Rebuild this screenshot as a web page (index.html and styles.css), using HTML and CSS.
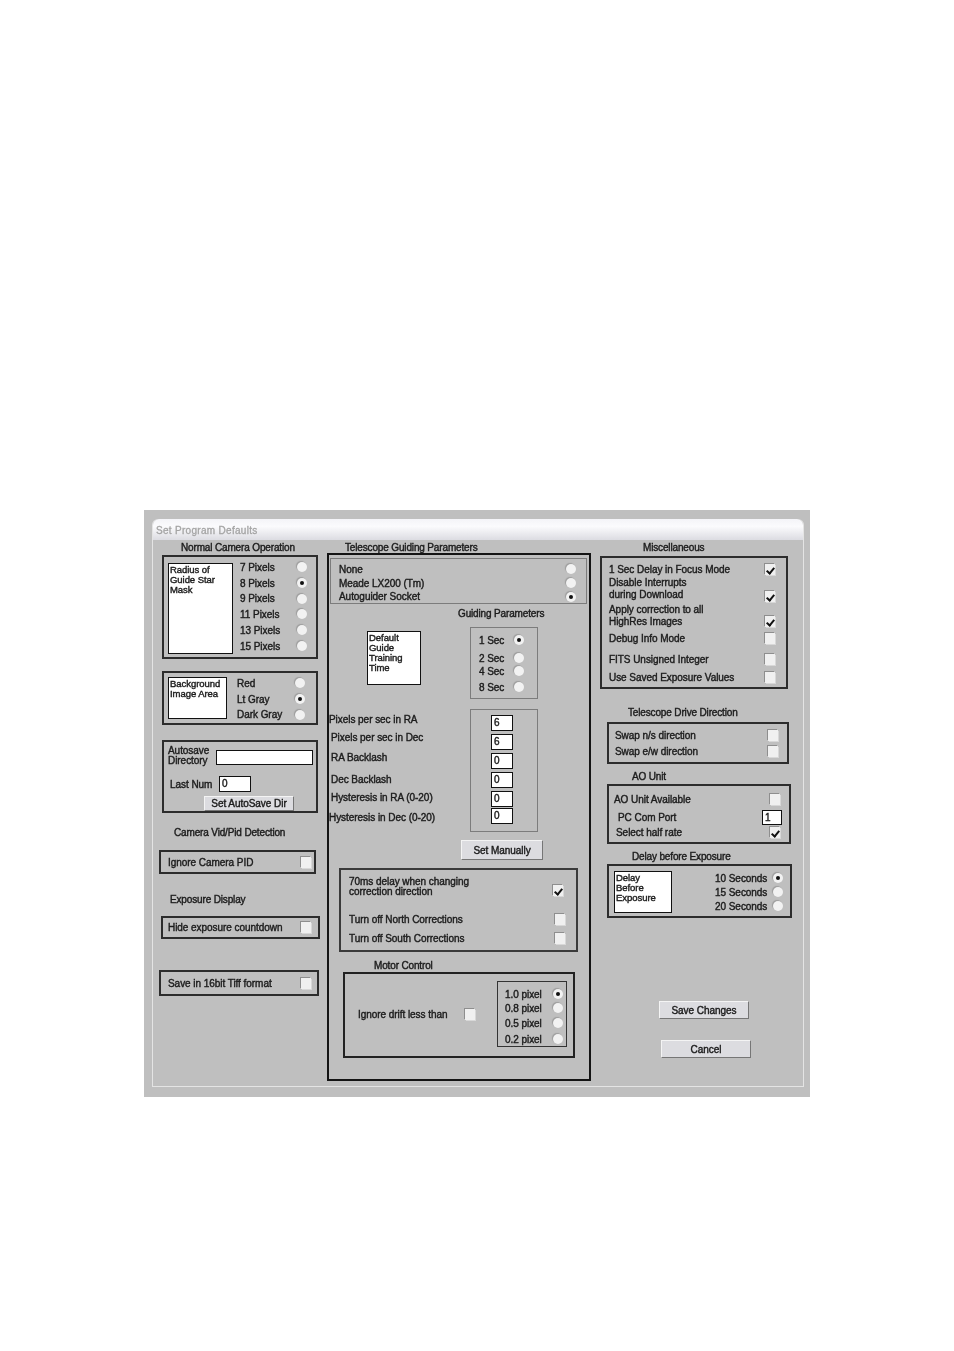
FILE: index.html
```html
<!DOCTYPE html>
<html lang="en">
<head>
    <meta charset="UTF-8">
    <title>Set Program Defaults</title>
    <link rel="stylesheet" href="styles.css">
</head>
<body>
    <div class="scan">
        <div class="window">
            <div class="titlebar">Set Program Defaults</div>
            <div class="window-body">

                <!-- left column -->
                <div class="col col-left">
                    <div class="label label-camera">Normal Camera Operation</div>
                    <div class="box box-radius">
                        <div class="note note-radius">Radius of<br>Guide Star<br>Mask</div>
                        <div class="options options-radius">
                            <div class="opt"><span>7 Pixels</span><i class="radio"></i></div>
                            <div class="opt"><span>8 Pixels</span><i class="radio on"></i></div>
                            <div class="opt"><span>9 Pixels</span><i class="radio"></i></div>
                            <div class="opt"><span>11 Pixels</span><i class="radio"></i></div>
                            <div class="opt"><span>13 Pixels</span><i class="radio"></i></div>
                            <div class="opt"><span>15 Pixels</span><i class="radio"></i></div>
                        </div>
                    </div>
                    <div class="box box-background">
                        <div class="note note-background">Background<br>Image Area</div>
                        <div class="options options-background">
                            <div class="opt"><span>Red</span><i class="radio"></i></div>
                            <div class="opt"><span>Lt Gray</span><i class="radio on"></i></div>
                            <div class="opt"><span>Dark Gray</span><i class="radio"></i></div>
                        </div>
                    </div>
                    <div class="box box-autosave">
                        <div class="autosave-row">
                            <div class="autosave-label">Autosave<br>Directory</div>
                            <div class="field field-dir"></div>
                        </div>
                        <div class="lastnum-row">
                            <span class="lastnum-label">Last Num</span>
                            <div class="field field-num">0</div>
                        </div>
                        <div class="btn btn-autosave">Set AutoSave Dir</div>
                    </div>
                    <div class="label label-pid">Camera Vid/Pid Detection</div>
                    <div class="box single box-pid"><span>Ignore Camera PID</span><i class="check"></i></div>
                    <div class="label label-exposure">Exposure Display</div>
                    <div class="box single box-hide"><span>Hide exposure countdown</span><i class="check"></i></div>
                    <div class="box single box-tiff"><span>Save in 16bit Tiff format</span><i class="check"></i></div>
                </div>

                <!-- centre column -->
                <div class="col col-centre">
                    <div class="label label-telescope">Telescope Guiding Parameters</div>
                    <div class="box box-guiding">
                        <div class="thin options-mount">
                            <div class="opt"><span>None</span><i class="radio"></i></div>
                            <div class="opt"><span>Meade LX200 (Tm)</span><i class="radio"></i></div>
                            <div class="opt"><span>Autoguider Socket</span><i class="radio on"></i></div>
                        </div>
                        <div class="label label-params">Guiding Parameters</div>
                        <div class="training-row">
                            <div class="note note-training">Default<br>Guide<br>Training<br>Time</div>
                            <div class="thin options-training">
                                <div class="opt"><span>1 Sec</span><i class="radio on"></i></div>
                                <div class="opt"><span>2 Sec</span><i class="radio"></i></div>
                                <div class="opt"><span>4 Sec</span><i class="radio"></i></div>
                                <div class="opt"><span>8 Sec</span><i class="radio"></i></div>
                            </div>
                        </div>
                        <div class="rates-row">
                            <div class="rate-labels">
                                <span>Pixels per sec in RA</span>
                                <span>Pixels per sec in Dec</span>
                                <span>RA Backlash</span>
                                <span>Dec Backlash</span>
                                <span>Hysteresis in RA (0-20)</span>
                                <span>Hysteresis in Dec (0-20)</span>
                            </div>
                            <div class="thin rate-fields">
                                <div class="field">6</div>
                                <div class="field">6</div>
                                <div class="field">0</div>
                                <div class="field">0</div>
                                <div class="field">0</div>
                                <div class="field">0</div>
                            </div>
                        </div>
                        <div class="btn btn-manual">Set Manually</div>
                        <div class="box box-corrections">
                            <div class="opt opt-delay"><span>70ms delay when changing<br>correction direction</span><i class="check on"></i></div>
                            <div class="opt"><span>Turn off North Corrections</span><i class="check"></i></div>
                            <div class="opt"><span>Turn off South Corrections</span><i class="check"></i></div>
                        </div>
                        <div class="label label-motor">Motor Control</div>
                        <div class="box box-motor">
                            <span class="drift-label">Ignore drift less than</span>
                            <i class="check"></i>
                            <div class="options-drift">
                                <div class="opt"><span>1.0 pixel</span><i class="radio on"></i></div>
                                <div class="opt"><span>0.8 pixel</span><i class="radio"></i></div>
                                <div class="opt"><span>0.5 pixel</span><i class="radio"></i></div>
                                <div class="opt"><span>0.2 pixel</span><i class="radio"></i></div>
                            </div>
                        </div>
                    </div>
                </div>

                <!-- right column -->
                <div class="col col-right">
                    <div class="label label-misc">Miscellaneous</div>
                    <div class="box box-misc">
                        <div class="opt"><span>1 Sec Delay in Focus Mode</span><i class="check on"></i></div>
                        <div class="opt opt-two"><span>Disable Interrupts<br>during Download</span><i class="check on"></i></div>
                        <div class="opt opt-two"><span>Apply correction to all<br>HighRes Images</span><i class="check on"></i></div>
                        <div class="opt"><span>Debug Info Mode</span><i class="check"></i></div>
                        <div class="opt"><span>FITS Unsigned Integer</span><i class="check"></i></div>
                        <div class="opt"><span>Use Saved Exposure Values</span><i class="check"></i></div>
                    </div>
                    <div class="label label-drive">Telescope Drive Direction</div>
                    <div class="box box-drive">
                        <div class="opt"><span>Swap n/s direction</span><i class="check"></i></div>
                        <div class="opt"><span>Swap e/w direction</span><i class="check"></i></div>
                    </div>
                    <div class="label label-ao">AO Unit</div>
                    <div class="box box-ao">
                        <div class="opt"><span>AO Unit Available</span><i class="check"></i></div>
                        <div class="opt"><span>PC Com Port</span><div class="field field-port">1</div></div>
                        <div class="opt"><span>Select half rate</span><i class="check on"></i></div>
                    </div>
                    <div class="label label-delay">Delay before Exposure</div>
                    <div class="box box-delay">
                        <div class="note note-delay">Delay<br>Before<br>Exposure</div>
                        <div class="options options-delay">
                            <div class="opt"><span>10 Seconds</span><i class="radio on"></i></div>
                            <div class="opt"><span>15 Seconds</span><i class="radio"></i></div>
                            <div class="opt"><span>20 Seconds</span><i class="radio"></i></div>
                        </div>
                    </div>
                    <div class="btn btn-save">Save Changes</div>
                    <div class="btn btn-cancel">Cancel</div>
                </div>

            </div>
        </div>
    </div>
</body>
</html>
```
FILE: styles.css
```css
* {
    box-sizing: border-box;
}
body {
    margin: 0;
    height: 1351px;
    padding: 510px 0 0 144px;
    background-color: #ffffff;
    font-family: 'Liberation Sans', Arial, sans-serif;
    font-size: 10px;
    letter-spacing: -0.05px;
    -webkit-text-stroke: 0.4px #1c1c1c;
    color: #1c1c1c;
}
.scan {
    width: 666px;
    height: 587px;
    padding: 9px 6px 10px 8px;
    background-color: #bfbfbf;
    filter: blur(0.35px);
}
.window {
    height: 568px;
    border: 1px solid #e4e4e4;
    border-top: none;
    border-radius: 6px 6px 0 0;
    background-color: #bfbfbf;
}
.titlebar {
    height: 21px;
    padding: 7px 0 0 3px;
    border-radius: 6px 6px 0 0;
    background: linear-gradient(#f4f4f8, #fbfbfd 35%, #dcdce2);
    -webkit-text-stroke: 0.3px #a4a4a4;
    color: #a4a4a4;
    letter-spacing: 0.3px;
    line-height: 10px;
}
.window-body {
    display: flex;
    padding-left: 6px;
}
.col {
    display: flex;
    flex-direction: column;
    align-items: flex-start;
}
.col-left {
    width: 161px;
}
.col-centre {
    width: 264px;
    margin-left: 7px;
}
.col-right {
    width: 192px;
    margin-left: 9px;
}

.label {
    height: 14px;
    line-height: 14px;
    letter-spacing: -0.15px;
    white-space: nowrap;
}
.box {
    border: 2px solid #2c2c2c;
    flex-shrink: 0;
}
.thin {
    border: 1px solid #7c7c7c;
}
.note {
    flex-shrink: 0;
    padding: 1px 0 0 1px;
    border: 1px solid #111111;
    background-color: #ffffff;
    font-size: 9.5px;
    line-height: 10px;
}
.field {
    height: 16px;
    padding-left: 2px;
    border: 1px solid #111111;
    background-color: #ffffff;
    line-height: 13px;
}
.opt {
    display: flex;
    justify-content: space-between;
    align-items: center;
    white-space: nowrap;
}
.options {
    display: grid;
    flex-shrink: 0;
}
.radio {
    position: relative;
    display: block;
    flex-shrink: 0;
    width: 10px;
    height: 10px;
    border-radius: 50%;
    background-color: #f2f2f2;
    box-shadow: -1px -1px 1px #9c9c9c;
}
.radio.on::after {
    content: '';
    position: absolute;
    top: 3px;
    left: 3px;
    width: 4px;
    height: 4px;
    border-radius: 50%;
    background-color: #111111;
}
.check {
    position: relative;
    display: block;
    flex-shrink: 0;
    width: 10px;
    height: 11px;
    background-color: #f0f0f0;
    box-shadow: -1px -1px 0 #8e8e8e, 1px 1px 0 #d8d8d8;
}
.check.on::after {
    content: '';
    position: absolute;
    top: 2px;
    left: 3px;
    width: 3px;
    height: 6px;
    border: solid #111111;
    border-width: 0 2px 2px 0;
    transform: rotate(40deg);
}
.btn {
    display: flex;
    flex-shrink: 0;
    justify-content: center;
    align-items: center;
    border: 1px solid;
    border-color: #f4f4f4 #767676 #767676 #f4f4f4;
    background-color: #dcdce0;
}
.single {
    display: flex;
    justify-content: space-between;
    align-items: center;
    padding-left: 7px;
    white-space: nowrap;
}

/* left column */
.label-camera {
    margin: 1px 0 0 22px;
}
.box-radius {
    display: flex;
    align-items: flex-start;
    width: 156px;
    height: 104px;
    margin-left: 3px;
    padding: 2px 0 0 4px;
}
.note-radius {
    width: 65px;
    height: 91px;
    margin-top: 4px;
}
.options-radius {
    width: 67px;
    margin-left: 7px;
    grid-template-rows: 16px 16px 15px 16px 16px 16px;
}
.box-background {
    display: flex;
    align-items: flex-start;
    width: 156px;
    height: 54px;
    margin: 12px 0 0 3px;
    padding: 2px 0 0 4px;
}
.note-background {
    width: 59px;
    height: 42px;
    margin-top: 2px;
}
.options-background {
    width: 68px;
    margin-left: 10px;
    grid-template-rows: 16px 16px 15px;
}
.box-autosave {
    width: 156px;
    height: 73px;
    margin: 15px 0 0 3px;
    padding: 4px 0 0 4px;
}
.autosave-row {
    display: flex;
    align-items: flex-start;
    height: 20px;
}
.autosave-label {
    width: 48px;
    line-height: 10px;
}
.field-dir {
    width: 97px;
    height: 15px;
    margin-top: 4px;
}
.lastnum-row {
    display: flex;
    align-items: center;
    margin-top: 10px;
}
.lastnum-label {
    width: 49px;
    margin-left: 2px;
}
.field-num {
    width: 32px;
}
.btn-autosave {
    width: 90px;
    height: 15px;
    margin: 4px 0 0 36px;
}
.label-pid {
    margin: 13px 0 0 15px;
}
.box-pid {
    width: 157px;
    height: 24px;
    margin-top: 10px;
    padding-right: 3px;
}
.label-exposure {
    margin: 19px 0 0 11px;
}
.box-hide {
    width: 159px;
    height: 23px;
    margin: 9px 0 0 2px;
    padding: 0 7px 0 5px;
}
.box-tiff {
    width: 160px;
    height: 26px;
    margin-top: 31px;
    padding-right: 6px;
}

/* centre column */
.label-telescope {
    margin: 1px 0 0 18px;
    height: 12px;
}
.box-guiding {
    width: 264px;
    height: 528px;
    border-color: #141414;
}
.options-mount {
    display: grid;
    grid-template-rows: 14px 14px 13px;
    width: 257px;
    height: 46px;
    margin: 3px 0 0 1px;
    padding: 3px 10px 0 8px;
}
.label-params {
    margin: 3px 0 0 129px;
    height: 15px;
}
.training-row {
    display: flex;
    align-items: flex-start;
    margin-top: 5px;
}
.note-training {
    width: 54px;
    height: 54px;
    margin: 4px 0 0 38px;
}
.options-training {
    display: grid;
    grid-template-rows: 18px 18px 8px 24px;
    width: 68px;
    height: 72px;
    margin-left: 49px;
    padding: 3px 13px 0 8px;
}
.rates-row {
    display: flex;
    margin-top: 10px;
}
.rate-labels {
    display: grid;
    grid-template-rows: 20px 16px 24px 20px 16px 24px;
    align-items: center;
    width: 141px;
    white-space: nowrap;
}
.rate-labels span:nth-child(n+2):nth-child(-n+5) {
    margin-left: 2px;
}
.rate-fields {
    display: flex;
    flex-direction: column;
    gap: 3px;
    width: 68px;
    height: 123px;
    padding: 5px 0 0 20px;
}
.rate-fields .field {
    width: 22px;
}
.rate-fields .field:last-child {
    margin-top: -2px;
}
.btn-manual {
    width: 82px;
    height: 20px;
    margin: 8px 0 0 132px;
}
.box-corrections {
    display: grid;
    grid-template-rows: 33px 18px 20px;
    width: 239px;
    height: 84px;
    margin: 8px 0 0 10px;
    padding: 7px 11px 0 8px;
    border-color: #3a3a3a;
}
.opt-delay {
    align-items: flex-start;
    line-height: 9.5px;
}
.opt-delay .check {
    margin: 8px 2px 0 0;
}
.label-motor {
    margin: 7px 0 0 45px;
    height: 13px;
}
.box-motor {
    display: flex;
    align-items: center;
    width: 232px;
    height: 86px;
    margin-left: 14px;
    padding: 0 0 2px 13px;
    border-color: #222222;
}
.drift-label {
    width: 107px;
    white-space: nowrap;
}
.options-drift {
    display: grid;
    grid-template-rows: 16px 12px 18px 14px;
    width: 70px;
    height: 66px;
    margin: 0 0 0 22px;
    padding: 4px 3px 0 7px;
    border: 1px solid #333333;
}

/* right column */
.label-misc {
    margin: 1px 0 0 43px;
    height: 15px;
}
.box-misc {
    display: grid;
    grid-template-rows: 16px 27px 24px 20px 22px 14px;
    width: 188px;
    height: 133px;
    padding: 3px 11px 0 7px;
}
.opt-two {
    align-items: flex-start;
    line-height: 12px;
}
.opt-two .check {
    margin-top: 14px;
}
.opt-two:nth-child(3) .check {
    margin-top: 12px;
}
.label-drive {
    margin: 17px 0 0 28px;
}
.box-drive {
    display: grid;
    grid-template-rows: 16px 16px;
    width: 182px;
    height: 42px;
    margin: 2px 0 0 7px;
    padding: 3px 9px 0 6px;
}
.label-ao {
    margin: 6px 0 0 32px;
}
.box-ao {
    display: grid;
    grid-template-rows: 16px 20px 10px;
    width: 184px;
    height: 60px;
    margin-left: 7px;
    padding: 5px 9px 0 5px;
}
.box-ao .opt:nth-child(2) span {
    margin-left: 4px;
}
.box-ao .opt:nth-child(3) span {
    margin-left: 2px;
}
.field-port {
    width: 20px;
    height: 15px;
    margin-right: -2px;
}
.label-delay {
    margin: 6px 0 0 32px;
}
.box-delay {
    display: flex;
    align-items: flex-start;
    width: 185px;
    height: 54px;
    margin-left: 7px;
    padding: 5px 0 0 5px;
}
.note-delay {
    width: 58px;
    height: 42px;
}
.options-delay {
    width: 68px;
    margin-left: 43px;
    grid-template-rows: 14px 14px 14px;
}
.btn-save {
    width: 90px;
    height: 18px;
    margin: 83px 0 0 59px;
}
.btn-cancel {
    width: 90px;
    height: 18px;
    margin: 21px 0 0 61px;
}
```
